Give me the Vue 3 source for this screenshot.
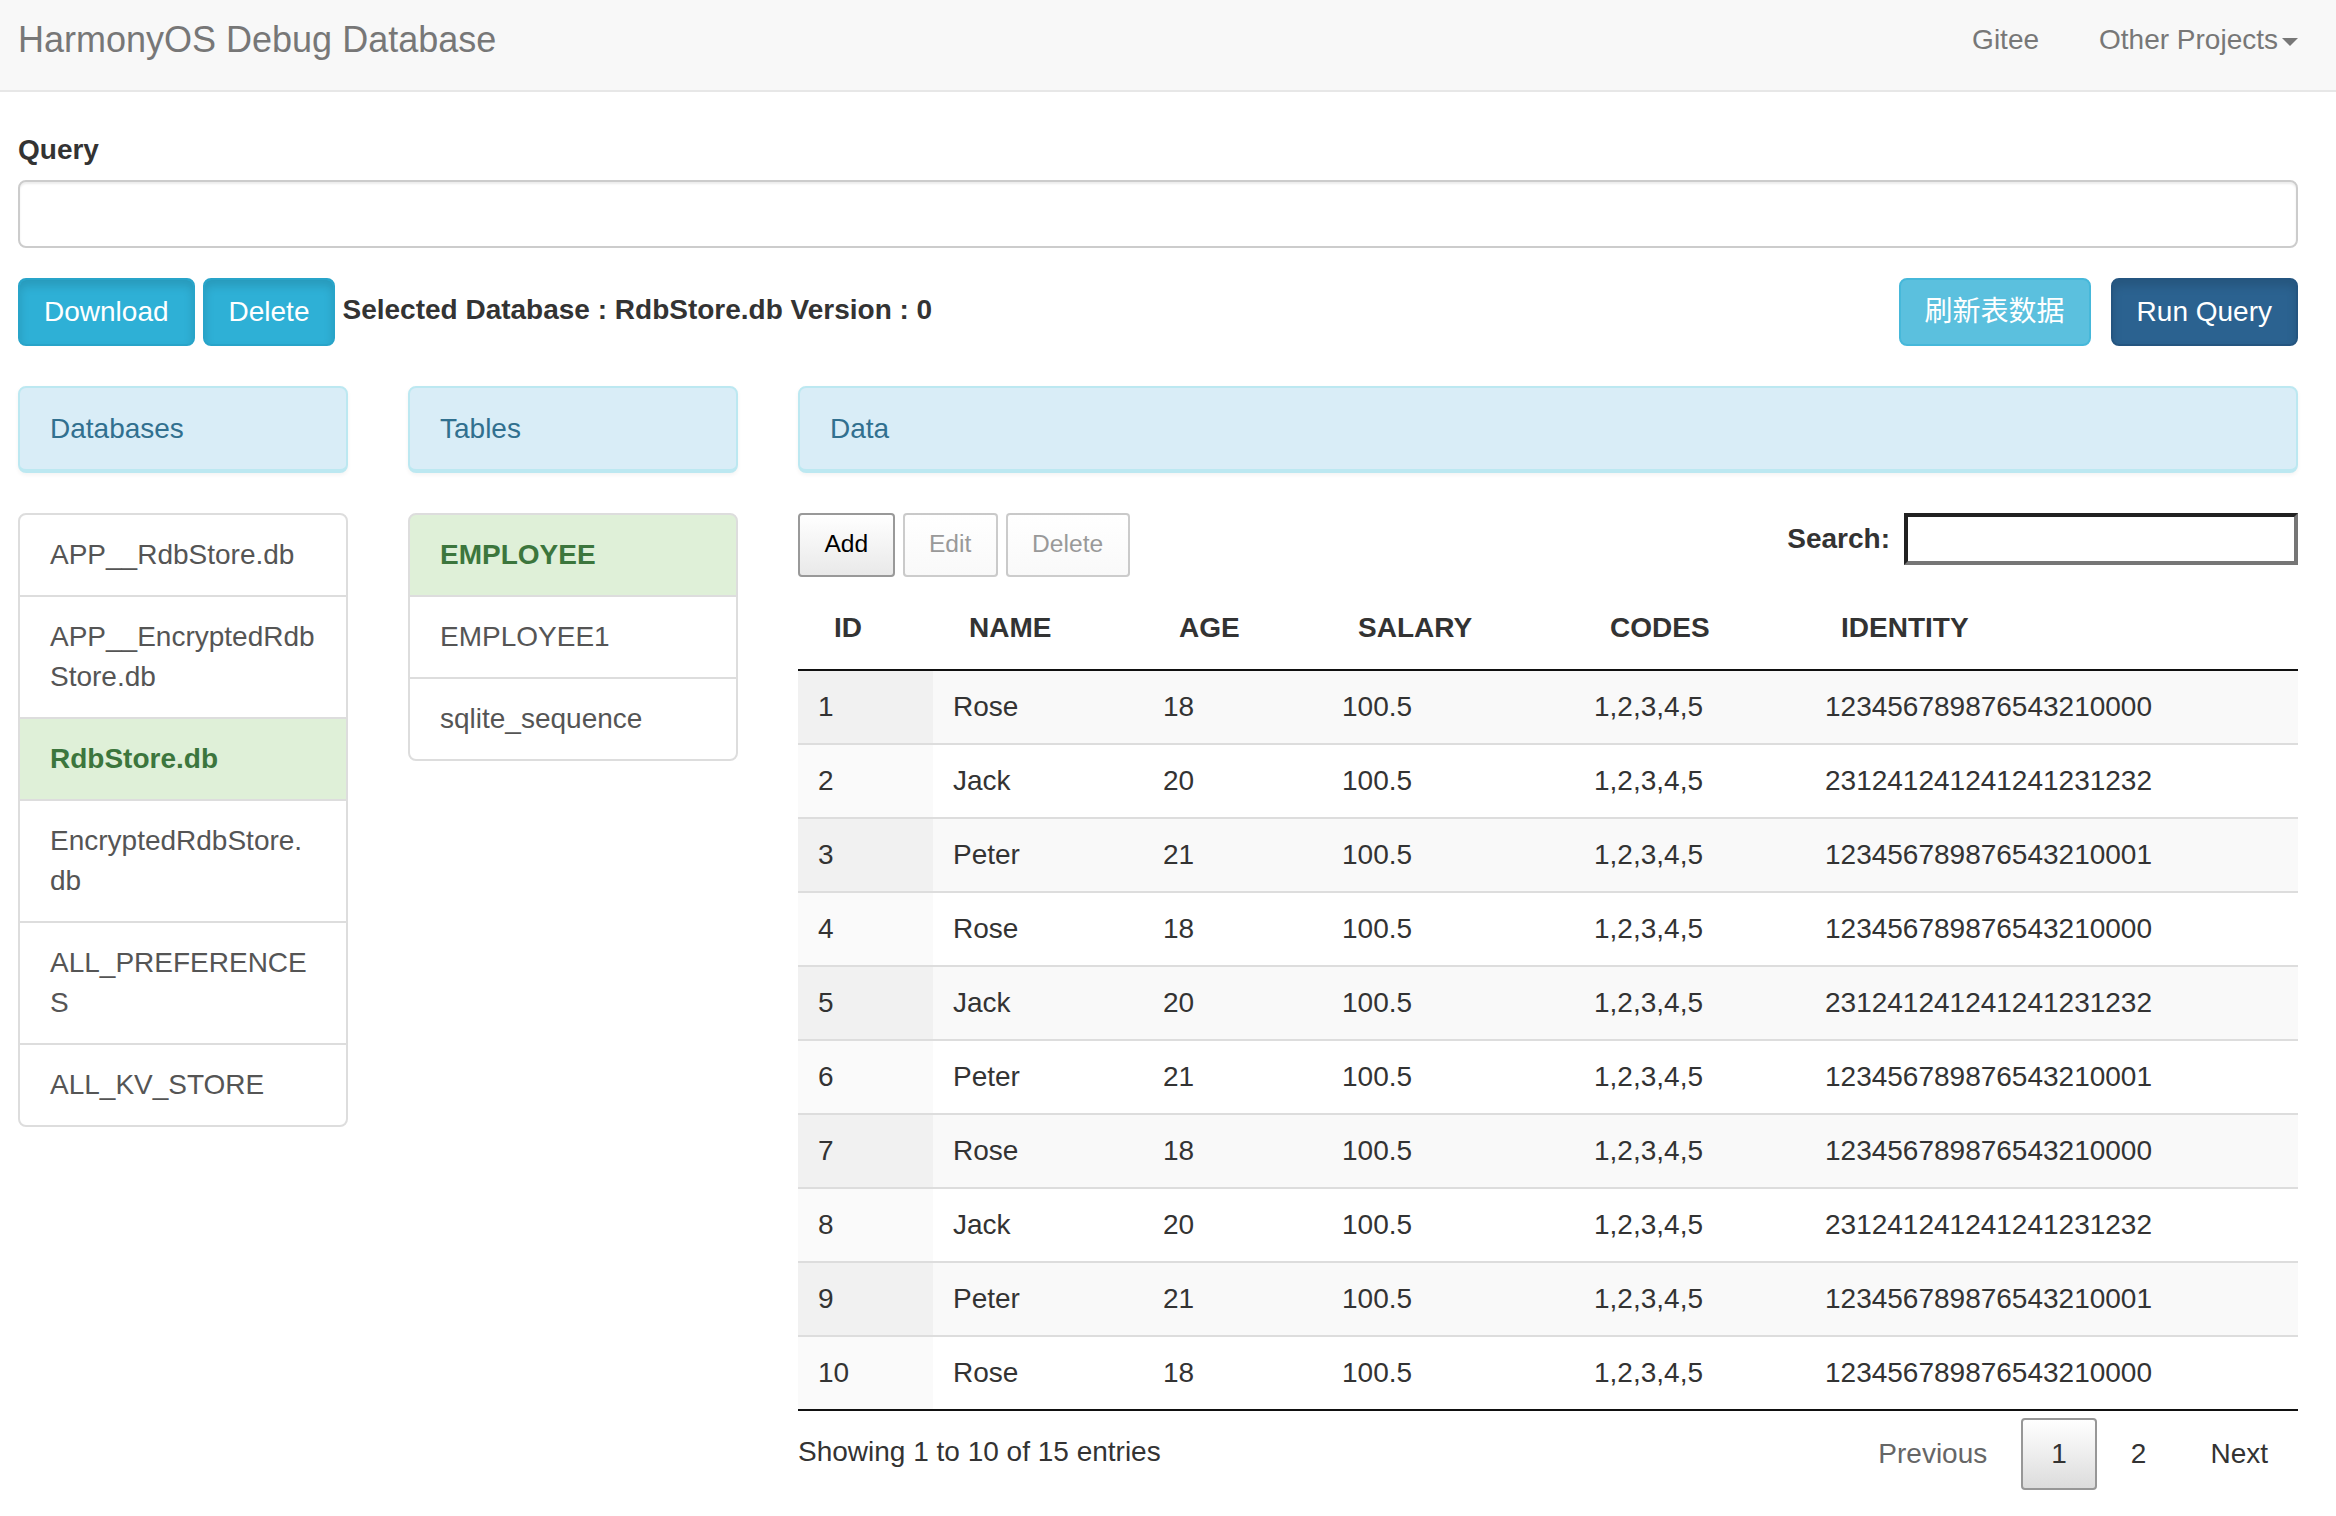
<script setup>
const databases = [
  { name: 'APP__RdbStore.db' },
  { name: 'APP__EncryptedRdbStore.db' },
  { name: 'RdbStore.db', active: true },
  { name: 'EncryptedRdbStore.db' },
  { name: 'ALL_PREFERENCES' },
  { name: 'ALL_KV_STORE' }
]

const tables = [
  { name: 'EMPLOYEE', active: true },
  { name: 'EMPLOYEE1' },
  { name: 'sqlite_sequence' }
]

const columns = ['ID', 'NAME', 'AGE', 'SALARY', 'CODES', 'IDENTITY']

const people = [
  { name: 'Rose', age: 18, identity: '123456789876543210000' },
  { name: 'Jack', age: 20, identity: '231241241241241231232' },
  { name: 'Peter', age: 21, identity: '123456789876543210001' }
]

const rows = Array.from({ length: 10 }, (_, i) => ({
  id: i + 1,
  ...people[i % 3],
  salary: '100.5',
  codes: '1,2,3,4,5'
}))
</script>

<template>
  <div class="page">
    <nav class="navbar">
      <a class="brand">HarmonyOS Debug Database</a>
      <div class="nav-links">
        <a>Gitee</a>
        <a class="dropdown">Other Projects<span class="caret" /></a>
      </div>
    </nav>

    <main class="content">
      <label class="query-label">Query</label>
      <input class="query-input" type="text" />

      <div class="actions">
        <button class="btn btn-info-dark">Download</button>
        <button class="btn btn-info-dark">Delete</button>
        <span class="selected">Selected Database : RdbStore.db Version : 0</span>
        <div class="actions-right">
          <button class="btn btn-info">刷新表数据</button>
          <button class="btn btn-primary">Run Query</button>
        </div>
      </div>

      <div class="columns">
        <section>
          <div class="panel-title">Databases</div>
          <ul class="list">
            <li v-for="db in databases" :key="db.name" :class="{ active: db.active }">{{ db.name }}</li>
          </ul>
        </section>

        <section>
          <div class="panel-title">Tables</div>
          <ul class="list">
            <li v-for="t in tables" :key="t.name" :class="{ active: t.active }">{{ t.name }}</li>
          </ul>
        </section>

        <section>
          <div class="panel-title">Data</div>

          <div class="toolbar">
            <div class="dt-buttons">
              <button class="dt-button">Add</button>
              <button class="dt-button disabled">Edit</button>
              <button class="dt-button disabled">Delete</button>
            </div>
            <label class="search">Search:<input type="search" /></label>
          </div>

          <table class="data-table">
            <colgroup>
              <col style="width: 135px" />
              <col style="width: 210px" />
              <col style="width: 179px" />
              <col style="width: 252px" />
              <col style="width: 231px" />
              <col />
            </colgroup>
            <thead>
              <tr>
                <th v-for="c in columns" :key="c">{{ c }}</th>
              </tr>
            </thead>
            <tbody>
              <tr v-for="r in rows" :key="r.id">
                <td class="sorted">{{ r.id }}</td>
                <td>{{ r.name }}</td>
                <td>{{ r.age }}</td>
                <td>{{ r.salary }}</td>
                <td>{{ r.codes }}</td>
                <td>{{ r.identity }}</td>
              </tr>
            </tbody>
          </table>

          <div class="table-footer">
            <div class="info">Showing 1 to 10 of 15 entries</div>
            <div class="paginate">
              <a class="page-btn disabled">Previous</a>
              <a class="page-btn current">1</a>
              <a class="page-btn">2</a>
              <a class="page-btn">Next</a>
            </div>
          </div>
        </section>
      </div>
    </main>
  </div>
</template>

<style>
body {
  margin: 0;
  background: #fff;
}
</style>

<style scoped>
.page {
  font-family: "Liberation Sans", Arial, "Noto Sans CJK SC", sans-serif;
  font-size: 28px;
  line-height: 40px;
  color: #333;
}

.navbar {
  display: flex;
  justify-content: space-between;
  height: 90px;
  padding: 0 38px 0 18px;
  background: #f8f8f8;
  border-bottom: 2px solid #e7e7e7;
  color: #777;
}

.brand {
  font-size: 36px;
  padding-top: 20px;
}

.nav-links {
  display: flex;
  gap: 60px;
  padding-top: 20px;
}

.caret {
  display: inline-block;
  margin-left: 4px;
  vertical-align: middle;
  border-top: 8px solid #777;
  border-left: 8px solid transparent;
  border-right: 8px solid transparent;
}

.content {
  padding: 38px 38px 0 18px;
}

.query-label {
  display: block;
  font-weight: bold;
  margin-bottom: 10px;
}

.query-input {
  display: block;
  box-sizing: border-box;
  width: 100%;
  height: 68px;
  border: 2px solid #ccc;
  border-radius: 8px;
  box-shadow: inset 0 2px 2px rgba(0, 0, 0, 0.075);
  outline: none;
}

.actions {
  display: flex;
  margin-top: 30px;
}

.actions-right {
  display: flex;
  gap: 20px;
  margin-left: auto;
}

.btn {
  height: 68px;
  padding: 0 24px;
  font: inherit;
  color: #fff;
  border-radius: 8px;
  border: 2px solid transparent;
}

.btn-info-dark {
  margin-right: 8px;
  background: #2eb0d6;
  border-color: #28a4c9;
  box-shadow: inset 0 6px 10px rgba(0, 0, 0, 0.125);
}

.btn-info {
  background: #5bc0de;
  border-color: #46b8da;
}

.btn-primary {
  background: #2b6290;
  border-color: #245580;
  box-shadow: inset 0 6px 10px rgba(0, 0, 0, 0.125);
}

.selected {
  margin-left: -1px;
  padding-top: 12px;
  font-weight: bold;
}

.columns {
  display: grid;
  grid-template-columns: 330px 330px 1fr;
  gap: 60px;
  margin-top: 40px;
}

.panel-title {
  padding: 21px 30px 20px;
  color: #31708f;
  background: #d9edf7;
  border: 2px solid #bce8f1;
  border-bottom-width: 4px;
  border-radius: 8px;
  box-shadow: 0 2px 4px rgba(0, 0, 0, 0.05);
}

.list {
  list-style: none;
  margin: 40px 0 0;
  padding: 0;
}

.list li {
  padding: 20px 30px;
  margin-bottom: -2px;
  color: #555;
  background: #fff;
  border: 2px solid #ddd;
  word-break: break-all;
}

.list li:first-child {
  border-radius: 8px 8px 0 0;
}

.list li:last-child {
  margin-bottom: 0;
  border-radius: 0 0 8px 8px;
}

.list li.active {
  color: #3c763d;
  background: #dff0d8;
  font-weight: bold;
}

.toolbar {
  display: flex;
  justify-content: space-between;
  align-items: flex-start;
  margin-top: 40px;
  margin-bottom: 11px;
}

.dt-buttons {
  display: flex;
  gap: 8px;
}

.dt-button {
  height: 64px;
  padding: 0 24.4px 2px;
  font: inherit;
  font-size: 24.6px;
  color: #000;
  border: 2px solid #999;
  border-radius: 4px;
  background: linear-gradient(to bottom, #fff, #e9e9e9);
}

.dt-button.disabled {
  color: #999;
  border-color: rgba(153, 153, 153, 0.5);
  background: linear-gradient(to bottom, #fff, #f9f9f9);
}

.search {
  display: flex;
  align-items: center;
  gap: 14px;
  font-weight: bold;
  padding-bottom: 1px;
}

.search input {
  box-sizing: border-box;
  width: 394px;
  height: 52px;
  border: 4px solid;
  border-color: #212121 #767676 #767676 #212121;
  outline: none;
  -webkit-appearance: none;
  appearance: none;
  border-radius: 0;
}

.data-table {
  width: 100%;
  table-layout: fixed;
  border-collapse: separate;
  border-spacing: 0;
  border-bottom: 2px solid #111;
}

.data-table th {
  padding: 20px 36px 21px;
  text-align: left;
  border-bottom: 2px solid #111;
}

.data-table td {
  padding: 16px 20px;
  border-top: 2px solid #ddd;
  white-space: nowrap;
}

.data-table tbody tr:first-child td {
  border-top: 0;
}

.data-table tbody tr:nth-child(odd) {
  background: #f9f9f9;
}

.data-table td.sorted {
  background: #fafafa;
}

.data-table tbody tr:nth-child(odd) td.sorted {
  background: #f1f1f1;
}

.table-footer {
  display: flex;
  justify-content: space-between;
  align-items: flex-start;
}

.info {
  padding-top: 21px;
}

.paginate {
  display: flex;
  gap: 4px;
  padding-top: 7px;
}

.page-btn {
  padding: 14px 28px;
  border: 2px solid transparent;
  border-radius: 4px;
}

.page-btn.disabled {
  color: #666;
}

.page-btn.current {
  border-color: #979797;
  background: linear-gradient(to bottom, #fff, #dcdcdc);
}
</style>
